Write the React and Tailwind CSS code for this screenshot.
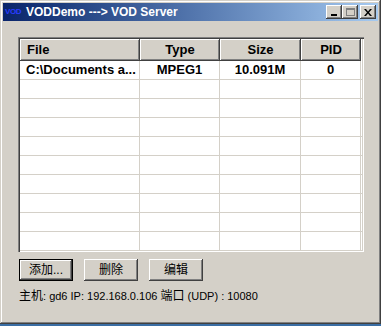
import React from "react";

const cols = [
  { key: "file", label: "File", w: "w-[120px]", align: "justify-start pl-[7px]" },
  { key: "type", label: "Type", w: "w-[80px]", align: "justify-center" },
  { key: "size", label: "Size", w: "w-[81px]", align: "justify-center" },
  { key: "pid", label: "PID", w: "w-[60px]", align: "justify-center" },
];

const rows = [
  { file: "C:\\Documents a...", type: "MPEG1", size: "10.091M", pid: "0" },
  ...Array.from({ length: 9 }, () => ({ file: "", type: "", size: "", pid: "" })),
];

const CaptionButton = ({ children, className = "" }) => (
  <div
    className={`w-[16px] h-[14px] bg-[#d4d0c8] flex items-center justify-center shadow-[inset_-1px_-1px_#404040,inset_1px_1px_#ffffff,inset_-2px_-2px_#808080] ${className}`}
  >
    {children}
  </div>
);

const Button = ({ label, isDefault }) => (
  <div
    className={`w-[54px] h-[22px] bg-[#d4d0c8] flex items-center justify-center text-[12px] text-black ${
      isDefault
        ? "border border-black shadow-[inset_-1px_-1px_#404040,inset_1px_1px_#ffffff,inset_-2px_-2px_#808080]"
        : "shadow-[inset_-1px_-1px_#404040,inset_1px_1px_#ffffff,inset_-2px_-2px_#808080]"
    }`}
  >
    {label}
  </div>
);

export default function App() {
  return (
    <div
      className="w-[381px] h-[326px] bg-[#3a6ea5] overflow-hidden"
      style={{ fontFamily: '"Liberation Sans", "Noto Sans CJK SC", sans-serif' }}
    >
      {/* window frame */}
      <div className="w-[381px] h-[324px] bg-[#d4d0c8] p-[3px] flex flex-col shadow-[inset_-1px_-1px_#404040,inset_1px_1px_#d4d0c8,inset_-2px_-2px_#808080,inset_2px_2px_#ffffff]">
        {/* title bar */}
        <div className="h-[18px] flex items-center bg-gradient-to-r from-[#0a246a] to-[#a6caf0] pr-[2px]">
          <div className="w-[16px] h-[16px] ml-[2px] flex items-center justify-center">
            <span className="text-[8px] font-bold text-[#2a3cff] leading-none tracking-[-0.5px]">VOD</span>
          </div>
          <span className="ml-[5px] text-[12px] font-bold text-white leading-none">
            VODDemo ---&gt; VOD Server
          </span>
          <div className="ml-auto flex items-center">
            <CaptionButton>
              <div className="w-[6px] h-[2px] bg-black mt-[6px]" />
            </CaptionButton>
            <CaptionButton>
              <div className="w-[9px] h-[8px] border border-[#808080] border-t-2" />
            </CaptionButton>
            <CaptionButton className="ml-[2px]">
              <svg width="8" height="7" viewBox="0 0 8 7">
                <path d="M0 0h2l2 2.5L6 0h2L5 3.5 8 7H6L4 4.5 2 7H0l3-3.5z" fill="#000" />
              </svg>
            </CaptionButton>
          </div>
        </div>

        {/* client area */}
        <div className="flex-1 flex flex-col pl-[15px] pt-[16px]">
          {/* list view */}
          <div className="w-[346px] h-[215px] bg-white p-[2px] shadow-[inset_1px_1px_#808080,inset_2px_2px_#404040,inset_-1px_-1px_#ffffff,inset_-2px_-2px_#d4d0c8]">
            <div className="w-full h-full overflow-hidden">
              <div className="flex h-[22px]">
                {cols.map((c) => (
                  <div
                    key={c.key}
                    className={`${c.w} h-full bg-[#d4d0c8] flex items-center ${c.align} text-[13px] font-bold text-black shadow-[inset_-1px_-1px_#404040,inset_1px_1px_#ffffff,inset_-2px_-2px_#808080]`}
                  >
                    {c.label}
                  </div>
                ))}
              </div>
              {rows.map((r, i) => (
                <div key={i} className="flex h-[19px] border-b border-[#d4d0c8]">
                  {cols.map((c) => (
                    <div
                      key={c.key}
                      className={`${c.w} h-full flex items-center ${
                        c.key === "file" ? "justify-start pl-[6px]" : "justify-center"
                      } border-r border-[#d4d0c8] text-[13px] font-bold text-black whitespace-nowrap`}
                    >
                      {r[c.key]}
                    </div>
                  ))}
                </div>
              ))}
            </div>
          </div>

          {/* buttons */}
          <div className="flex gap-[11px] mt-[7px] ml-[1px]">
            <Button label="添加..." isDefault />
            <Button label="删除" />
            <Button label="编辑" />
          </div>

          {/* status line */}
          <div className="mt-[8px] ml-[1px] text-[11px] text-black leading-[14px] whitespace-nowrap">
            <span className="text-[12px]">主机</span>: gd6 IP: 192.168.0.106 <span className="text-[12px]">端口</span> (UDP) : 10080
          </div>
        </div>
      </div>
    </div>
  );
}
